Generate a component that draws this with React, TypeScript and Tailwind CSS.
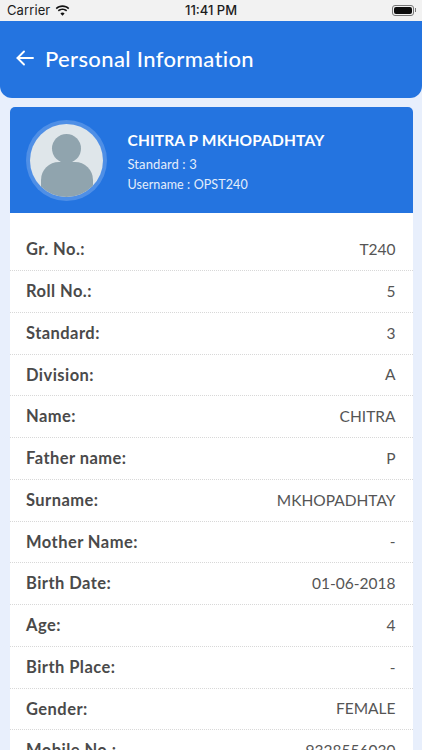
const rows = [
  { label: 'Gr. No.:', value: 'T240' },
  { label: 'Roll No.:', value: '5' },
  { label: 'Standard:', value: '3' },
  { label: 'Division:', value: 'A' },
  { label: 'Name:', value: 'CHITRA' },
  { label: 'Father name:', value: 'P' },
  { label: 'Surname:', value: 'MKHOPADHTAY' },
  { label: 'Mother Name:', value: '-' },
  { label: 'Birth Date:', value: '01-06-2018' },
  { label: 'Age:', value: '4' },
  { label: 'Birth Place:', value: '-' },
  { label: 'Gender:', value: 'FEMALE' },
  { label: 'Mobile No.:', value: '9328556030' },
];

function StatusBar() {
  return (
    <div className="h-[20.5px] bg-[#f2f2f2] flex items-center justify-between pl-[7px] pr-[6px] text-[#1c1c1c] text-[13px] font-['Inter',sans-serif] shrink-0 relative">
      <div className="flex items-center gap-[5px]">
        <span className="tracking-[0.1px]">Carrier</span>
        <svg width="15" height="11" viewBox="0 0 16 12" fill="#111">
          <path d="M8 2.200c2.400 0 4.600.9 6.200 2.500l1.200-1.300C13.400 1.400 10.800.300 8 .300S2.600 1.400.600 3.400l1.200 1.300C3.400 3.100 5.600 2.200 8 2.200z" />
          <path d="M8 5.500c1.500 0 2.900.6 3.900 1.600l1.200-1.300C11.800 4.500 10 3.700 8 3.700s-3.800.8-5.100 2.100l1.200 1.300c1-1 2.400-1.600 3.900-1.600z" />
          <path d="M8 8.200c-.9 0-1.700.4-2.300 1L8 11.600l2.300-2.400c-.6-.6-1.400-1-2.300-1z" />
        </svg>
      </div>
      <span className="absolute left-[185px] font-medium text-[13px]">11:41 PM</span>
      <div className="flex items-center">
        <div className="w-[22px] h-[11px] rounded-[3px] border border-[#777] p-[1px]">
          <div className="w-full h-full rounded-[2px] bg-[#0d0d0d]" />
        </div>
        <div className="w-[1px] h-[4px] bg-[#777] ml-[1px]" />
      </div>
    </div>
  );
}

export default function App() {
  return (
    <div className="h-[750px] w-[422px] overflow-hidden bg-[#e8effc] flex flex-col font-['Lato',sans-serif]">
      <StatusBar />
      <div className="h-[77.5px] bg-[#2474e0] rounded-b-[12px] flex items-center pl-[16px] gap-[11px] text-white shrink-0">
        {/* back arrow */}
        <svg width="18" height="16" viewBox="0 0 18 16" fill="none" stroke="currentColor" strokeWidth="1.900" strokeLinecap="round" strokeLinejoin="round" className="mt-[-2px] shrink-0">
          <path d="M17 8H1.500" />
          <path d="M8 1.500 1.500 8 8 14.500" />
        </svg>
        <h1 className="text-[22px] font-medium tracking-[0.35px] mt-[-2px]">Personal Information</h1>
      </div>

      <div className="mx-[9.5px] mt-[9px] rounded-t-[5px] overflow-hidden bg-white">
        <div className="h-[106px] bg-[#2474e0] flex items-center pl-[16.5px] text-white">
          <div className="w-[81px] h-[81px] rounded-full bg-[#4f8fe6] p-[4px] shrink-0">
            <div className="w-full h-full rounded-full bg-[#dfe6ea] overflow-hidden flex flex-col items-center">
              <div className="w-[29px] h-[29px] rounded-full bg-[#90a4ae] mt-[10px] shrink-0" />
              <div className="w-[52px] h-[40px] rounded-t-[18px] bg-[#90a4ae] mt-[-1px] shrink-0" />
            </div>
          </div>
          <div className="ml-[20.5px] flex flex-col mt-[4px]">
            <span className="text-[15.5px] font-bold tracking-[0.15px] leading-[20px]">CHITRA P MKHOPADHTAY</span>
            <span className="text-[13px] leading-[20px] mt-[4px] tracking-[0.1px] text-[#e3edfb]">Standard : 3</span>
            <span className="text-[12.5px] leading-[20px] mt-[1px] tracking-[0.1px] text-[#e3edfb]">Username : OPST240</span>
          </div>
        </div>

        <div className="pt-[16.3px]">
          {rows.map((row) => (
            <div
              key={row.label}
              className="h-[41.75px] flex items-center justify-between pl-[16.5px] pr-[17px] border-b border-dotted border-[#d8d8d8]"
            >
              <span className="text-[16.5px] font-bold text-[#4a4a4a] tracking-[0.45px]">{row.label}</span>
              <span className="text-[15.5px] text-[#555555]">{row.value}</span>
            </div>
          ))}
        </div>
      </div>
    </div>
  );
}
